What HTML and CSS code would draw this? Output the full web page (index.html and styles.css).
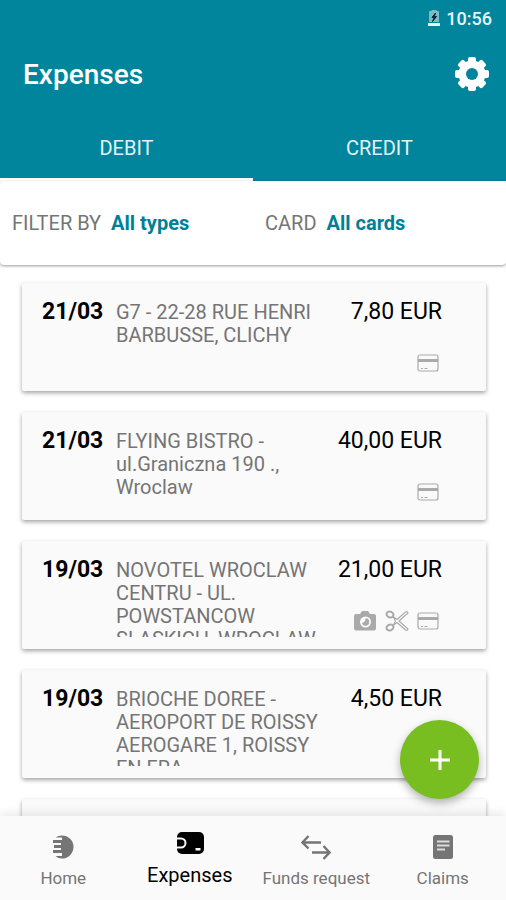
FILE: index.html
```html
<!DOCTYPE html>
<html lang="en">
<head>
<meta charset="utf-8">
<meta name="viewport" content="width=device-width, initial-scale=1">
<title>Expenses</title>
<link rel="stylesheet" href="styles.css">
</head>
<body>
<svg class="sprite" aria-hidden="true">
  <symbol id="card" viewBox="0 0 22 18">
    <rect x="1" y="1" width="20" height="16" rx="2" fill="none" stroke="currentColor" stroke-width="1.2"/>
    <path d="M1 5h20v3H1z" fill="currentColor"/>
    <path d="M4 14.5h2M7.500 14.5h3" stroke="currentColor" stroke-width="1.200"/>
  </symbol>
  <symbol id="camera" viewBox="0 0 24 22">
    <path fill-rule="evenodd" d="M3 4h4l2-3h6l2 3h4a2 2 0 0 1 2 2v12.500a2 2 0 0 1-2 2H3a2 2 0 0 1-2-2V6a2 2 0 0 1 2-2zM12.500 6.500a5.500 5.500 0 1 0 0 11a5.500 5.500 0 0 0 0-11z" fill="currentColor"/>
    <path d="M12.500 8.300a3.700 3.700 0 1 1-3.600 4.500c2 .2 3.800-1.500 3.600-4.500z" fill="currentColor"/>
  </symbol>
  <symbol id="scissors" viewBox="0 0 24 22">
    <g fill="none" stroke="currentColor">
      <ellipse cx="5" cy="4.500" rx="3.600" ry="2.800" transform="rotate(25 5 4.500)" stroke-width="2"/>
      <ellipse cx="5" cy="17.500" rx="3.600" ry="2.800" transform="rotate(-25 5 17.500)" stroke-width="2"/>
      <path d="M8 6.500l4 3L20.500 2q2-.8 2.500 1L14 11l9 8q-.5 1.800-2.500 1L12 12.500l-4 3M8 6.500l2.500 4.500L8 15.500" stroke-width="1.100" stroke-linejoin="round"/>
    </g>
  </symbol>
</svg>
<div class="app">
  <header class="header">
    <div class="status">
      <svg class="battery" viewBox="0 0 12 18" role="img" aria-label="Battery charging">
        <path d="M1 3q0-1 1-1h1.500V1h5v1H10q1 0 1 1v10H1z" fill="#7db9c6"/>
        <path d="M0 14h12v3H0z" fill="#e9f5f7"/>
        <path d="M7.500 4L4 8.500h2.200L4.500 12.500l4-5H6.300z" fill="#06262c" stroke="#06262c"/>
      </svg>
      <span>10:56</span>
    </div>
    <div class="titlebar">
      <h1 class="title">Expenses</h1>
      <button class="settings" aria-label="Settings">
        <svg viewBox="0 0 34 34">
          <g fill="#fff">
            <rect id="tooth" x="13" y="0" width="8" height="34" rx="2"/>
            <use href="#tooth" transform="rotate(45 17 17)"/>
            <use href="#tooth" transform="rotate(90 17 17)"/>
            <use href="#tooth" transform="rotate(135 17 17)"/>
            <circle cx="17" cy="17" r="13.500"/>
          </g>
          <circle cx="17" cy="17" r="6" fill="#00859c"/>
        </svg>
      </button>
    </div>
    <div class="tabs" role="tablist">
      <button class="tab tab-active" role="tab" aria-selected="true">DEBIT</button>
      <button class="tab" role="tab" aria-selected="false">CREDIT</button>
    </div>
  </header>

  <section class="filters" aria-label="Filters">
    <div class="filter">
      <span class="filter-label" id="type-label">FILTER BY</span>
      <button class="filter-value" aria-describedby="type-label">All types</button>
    </div>
    <div class="filter">
      <span class="filter-label" id="card-label">CARD</span>
      <button class="filter-value" aria-describedby="card-label">All cards</button>
    </div>
  </section>

  <main class="content">
    <ul class="list">
      <li class="expense">
        <time class="date">21/03</time>
        <p class="merchant">G7 - 22-28 RUE HENRI BARBUSSE, CLICHY</p>
        <div class="side">
          <span class="amount">7,80 EUR</span>
          <div class="marks"><svg class="mark-card"><use href="#card"/></svg></div>
        </div>
      </li>
      <li class="expense">
        <time class="date">21/03</time>
        <p class="merchant">FLYING BISTRO - ul.Graniczna 190 ., Wroclaw</p>
        <div class="side">
          <span class="amount">40,00 EUR</span>
          <div class="marks"><svg class="mark-card"><use href="#card"/></svg></div>
        </div>
      </li>
      <li class="expense">
        <time class="date">19/03</time>
        <p class="merchant">NOVOTEL WROCLAW CENTRU - UL. POWSTANCOW SLASKICH, WROCLAW</p>
        <div class="side">
          <span class="amount">21,00 EUR</span>
          <div class="marks">
            <svg class="mark"><use href="#camera"/></svg>
            <svg class="mark"><use href="#scissors"/></svg>
            <svg class="mark-card"><use href="#card"/></svg>
          </div>
        </div>
      </li>
      <li class="expense">
        <time class="date">19/03</time>
        <p class="merchant">BRIOCHE DOREE - AEROPORT DE ROISSY AEROGARE 1, ROISSY EN FRA</p>
        <div class="side">
          <span class="amount">4,50 EUR</span>
        </div>
      </li>
      <li class="expense"></li>
    </ul>
    <button class="fab" aria-label="Add expense">
      <svg viewBox="0 0 22 22"><path d="M11 1v20M1 11h20" stroke="#fff" stroke-width="3"/></svg>
    </button>
  </main>

  <nav class="nav">
    <a class="nav-item" href="#home">
      <svg class="nav-icon" viewBox="0 0 30 26">
        <path d="M7.500 3.500Q10 1.500 14 1.500a11.500 11.500 0 0 1 0 23q-4 0-6.500-2.500h6.500v-3H5v-3h8v-2H6v-3h7V9H5V6h9V3.500z" fill="currentColor"/>
      </svg>
      <span>Home</span>
    </a>
    <a class="nav-item nav-active" href="#expenses" aria-current="page">
      <svg class="nav-icon" viewBox="0 0 30 26">
        <rect x="2" y="2" width="27" height="22" rx="5" fill="currentColor"/>
        <path d="M1 8.500h5a4.500 4.500 0 0 1 0 9H1" fill="none" stroke="#fafafa" stroke-width="2"/>
        <path d="M20.500 18h5v2.500h-5z" fill="#fafafa"/>
      </svg>
      <span>Expenses</span>
    </a>
    <a class="nav-item" href="#funds">
      <svg class="nav-icon" viewBox="0 0 30 26">
        <path d="M20 8.500H2M7.500 2L1.500 8.500l6 6M11 18.500h17M22.500 12l6 6.500-6 6.500" fill="none" stroke="currentColor" stroke-width="2.400"/>
      </svg>
      <span>Funds request</span>
    </a>
    <a class="nav-item" href="#claims">
      <svg class="nav-icon" viewBox="0 0 30 26">
        <rect x="5" y="1" width="20" height="24" rx="2.500" fill="currentColor"/>
        <path d="M9 7.500h12.500M9 11.500h12.500M9 15.500h8" stroke="#dcdcdc" stroke-width="2"/>
      </svg>
      <span>Claims</span>
    </a>
  </nav>
</div>
</body>
</html>
```
FILE: styles.css
```css
* {
  box-sizing: border-box;
}

body {
  margin: 0;
  font-family: Roboto, "Liberation Sans", sans-serif;
  background: #fff;
  color: #000;
}

button {
  border: 0;
  padding: 0;
  background: none;
  font: inherit;
  color: inherit;
}

.sprite {
  display: none;
}

.app {
  display: flex;
  flex-direction: column;
  height: 100vh;
}

.header {
  background: #00859c;
  color: #fff;
}

.status {
  display: flex;
  justify-content: flex-end;
  align-items: center;
  gap: 6px;
  height: 36px;
  padding: 0 14px;
  font-size: 18px;
  font-weight: 500;
  color: #e9f5f7;
}

.battery {
  width: 12px;
  height: 18px;
}

.titlebar {
  display: flex;
  justify-content: space-between;
  align-items: center;
  height: 76px;
  padding: 0 17px 0 23px;
}

.title {
  margin: 0;
  font-size: 28px;
  font-weight: 500;
}

.settings,
.settings svg {
  display: block;
  width: 34px;
  height: 34px;
}

.tabs {
  display: grid;
  grid-template-columns: 1fr 1fr;
}

.tab {
  height: 69px;
  padding-top: 5px;
  border-bottom: 3px solid transparent;
  font-size: 20px;
  color: #e4f3f5;
}

.tab-active {
  border-bottom-color: #fff;
}

.filters {
  display: grid;
  grid-template-columns: 1fr 1fr;
  height: 84px;
  border-radius: 4px;
  background: #fff;
  box-shadow: 0 1px 3px rgba(0, 0, 0, 0.4);
}

.filter {
  display: flex;
  align-items: center;
  gap: 10px;
  padding-left: 12px;
  font-size: 20px;
}

.filter-label {
  color: #757575;
}

.filter-value {
  font-weight: 700;
  color: #007f96;
}

.content {
  position: relative;
  flex: 1;
  min-height: 0;
}

.list {
  display: flex;
  flex-direction: column;
  gap: 21px;
  height: 100%;
  margin: 0;
  padding: 18px 20px 0 22px;
  overflow: hidden;
  list-style: none;
}

.expense {
  display: grid;
  grid-template-columns: 74px 1fr auto;
  flex: none;
  height: 108px;
  padding: 17px 44px 12px 20px;
  border-radius: 2px;
  background: #fafafa;
  box-shadow: 0 2px 4px rgba(0, 0, 0, 0.36);
}

.date {
  font-size: 23px;
  font-weight: 700;
  line-height: 23px;
}

.merchant {
  max-width: 210px;
  margin: 0;
  padding-top: 1px;
  overflow: hidden;
  font-size: 20px;
  line-height: 23px;
  color: #757575;
}

.side {
  display: flex;
  flex-direction: column;
  justify-content: space-between;
  align-items: flex-end;
}

.amount {
  font-size: 23px;
  line-height: 24px;
}

.marks {
  display: flex;
  align-items: center;
  gap: 8px;
  height: 22px;
  margin: 0 3px 5px 0;
  color: #aaa;
}

.mark {
  width: 24px;
  height: 22px;
}

.mark-card {
  width: 22px;
  height: 18px;
}

.fab {
  position: absolute;
  right: 27px;
  bottom: 17px;
  display: grid;
  place-items: center;
  width: 79px;
  height: 79px;
  border-radius: 50%;
  background: #78be20;
  box-shadow: 0 4px 8px rgba(0, 0, 0, 0.3);
}

.fab svg {
  width: 22px;
  height: 22px;
}

.nav {
  position: relative;
  display: grid;
  grid-template-columns: repeat(4, 1fr);
  height: 84px;
  background: #fafafa;
  box-shadow: 0 -2px 10px rgba(0, 0, 0, 0.1);
}

.nav-item {
  display: flex;
  flex-direction: column;
  align-items: center;
  gap: 7px;
  padding-top: 18px;
  font-size: 17px;
  line-height: 22px;
  white-space: nowrap;
  text-decoration: none;
  color: #757575;
}

.nav-active {
  padding-top: 14px;
  font-size: 20px;
  line-height: 24px;
  color: #000;
}

.nav-icon {
  width: 30px;
  height: 26px;
}
```
